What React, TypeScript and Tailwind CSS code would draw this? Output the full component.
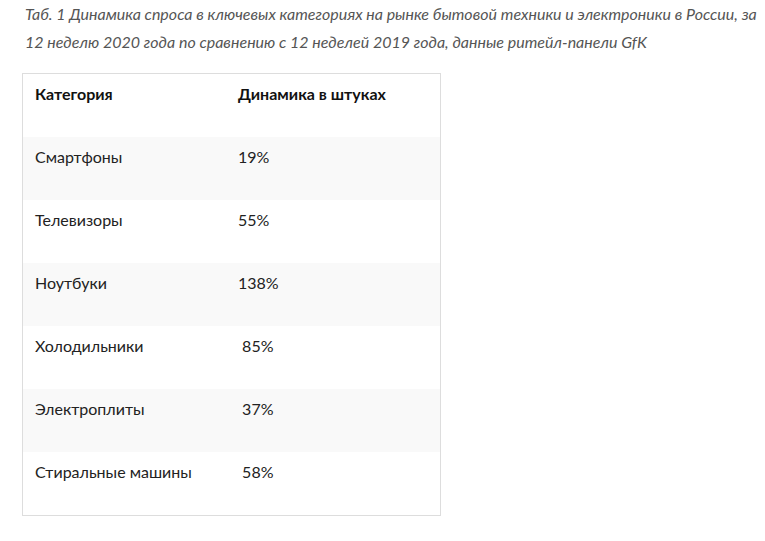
import React from "react";

const rows: [string, string][] = [
  ["Смартфоны", "19%"],
  ["Телевизоры", "55%"],
  ["Ноутбуки", "138%"],
  ["Холодильники", "\u00a085%"],
  ["Электроплиты", "\u00a037%"],
  ["Стиральные машины", "\u00a058%"],
];

export default function App() {
  return (
    <div
      className="w-[765px] h-[541px] bg-white text-[#222] overflow-hidden"
      style={{ fontFamily: "Lato, 'Open Sans', sans-serif" }}
    >
      <div className="pl-[25px] pr-[8px] pt-[0px]">
        <p className="italic text-[16px] leading-[28px] text-[#555]">
          Таб. 1 Динамика спроса в ключевых категориях на рынке бытовой техники и электроники в России, за 12 неделю 2020 года по сравнению с 12 неделей 2019 года, данные ритейл-панели GfK
        </p>
      </div>
      <div className="ml-[22px] mt-[17px] w-[419px] border border-[#dddddd]">
        <div className="grid grid-cols-[203px_1fr] h-[63px] pt-[10px] pl-[12px] font-bold text-[16px] leading-[20px] text-[#111]">
          <div>Категория</div>
          <div>Динамика в штуках</div>
        </div>
        {rows.map(([a, b], i) => (
          <div
            key={a}
            className={`grid grid-cols-[203px_1fr] h-[63px] pt-[10px] pl-[12px] text-[16px] leading-[20px] text-[#222] ${
              i % 2 === 0 ? "bg-[#f9f9f9]" : "bg-white"
            }`}
          >
            <div>{a}</div>
            <div className="whitespace-pre">{b}</div>
          </div>
        ))}
      </div>
    </div>
  );
}
